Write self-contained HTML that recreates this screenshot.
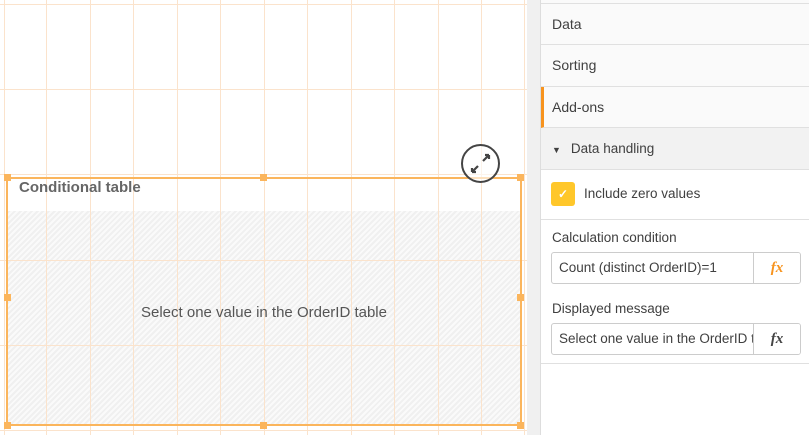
<!DOCTYPE html>
<html><head><style>
*{margin:0;padding:0;box-sizing:border-box}
body{width:809px;height:435px;overflow:hidden;font-family:"Liberation Sans",sans-serif;background:#fff;position:relative}
.canvas{position:absolute;left:0;top:0;width:527px;height:435px;background:#fff}
.v{position:absolute;top:0;bottom:0;width:1px;background:#fbe3cc}
.h{position:absolute;left:0;right:0;height:1px;background:#fbe3cc}
.obj{position:absolute;left:6px;top:177px;width:516px;height:249px;border:2px solid #fbb55c}
.hatch{position:absolute;left:0;right:0;top:32px;bottom:0;background:repeating-linear-gradient(135deg,rgba(0,0,0,.06) 0 2px,rgba(0,0,0,.02) 2px 4px)}
.title{position:absolute;left:19px;top:179px;font-weight:bold;font-size:15px;color:#666;z-index:2}
.msg{position:absolute;left:6px;width:516px;top:304px;text-align:center;font-size:15px;color:#555;z-index:2}
.hd{position:absolute;width:7px;height:7px;background:#fbb55c}
.strip{position:absolute;left:527px;top:0;width:13px;height:435px;background:#f0f0f0}
.panel{position:absolute;left:540px;top:0;width:269px;height:435px;background:#fff;border-left:1px solid #ddd}
.row{position:absolute;left:0;right:0;border-bottom:1px solid #e0e0e0;font-size:14px;color:#404040;padding-left:11px}
.fx{position:absolute;right:0;top:0;width:47px;height:100%;border-left:1px solid #ccc;text-align:center;font-family:"Liberation Serif",serif;font-style:italic;font-weight:bold;font-size:15px;line-height:30px;background:#fff}
.inp{position:absolute;left:10px;width:250px;height:32px;border:1px solid #ccc;border-radius:3px;font-size:13.5px;color:#404040;padding-left:7px;line-height:30px;overflow:hidden;white-space:nowrap}
</style></head><body>
<div class="canvas">
<div class="obj"><div class="hatch"></div></div>
<div class="v" style="left:4px"></div><div class="v" style="left:46px"></div><div class="v" style="left:90px"></div><div class="v" style="left:133px"></div><div class="v" style="left:177px"></div><div class="v" style="left:220px"></div><div class="v" style="left:264px"></div><div class="v" style="left:307px"></div><div class="v" style="left:351px"></div><div class="v" style="left:394px"></div><div class="v" style="left:438px"></div><div class="v" style="left:481px"></div><div class="v" style="left:524px"></div>
<div class="h" style="top:4px"></div><div class="h" style="top:89px"></div><div class="h" style="top:174px"></div><div class="h" style="top:260px"></div><div class="h" style="top:345px"></div><div class="h" style="top:430px"></div>
<div class="title">Conditional table</div><div class="msg">Select one value in the OrderID table</div>
<div style="position:absolute;left:6px;top:177px;width:516px;height:249px;border:2px solid #fbb55c"></div>
<div class="hd" style="left:4px;top:174px"></div><div class="hd" style="left:260px;top:174px"></div><div class="hd" style="left:517px;top:174px"></div>
<div class="hd" style="left:4px;top:294px"></div><div class="hd" style="left:517px;top:294px"></div>
<div class="hd" style="left:4px;top:422px"></div><div class="hd" style="left:260px;top:422px"></div><div class="hd" style="left:517px;top:422px"></div>
<div style="position:absolute;left:461px;top:144px;width:39px;height:39px;border:2px solid #444;border-radius:50%;background:rgba(255,255,255,.6);z-index:3">
<svg width="35" height="35" viewBox="0 0 35 35"><path d="M9 26 L15 20 M9 26 V22 M9 26 H13 M26 9 L20 15 M26 9 V13 M26 9 H22" stroke="#444" stroke-width="2.2" fill="none"/></svg></div>
</div>
<div class="strip"></div>
<div class="panel">
<div class="row" style="top:0;height:4px;background:#fafafa;padding:0"></div>
<div class="row" style="top:4px;height:41px;line-height:40px;background:#fafafa">Data</div>
<div class="row" style="top:45px;height:42px;line-height:41px;background:#fafafa">Sorting</div>
<div class="row" style="top:87px;height:41px;line-height:40px;background:#fafafa;border-left:3px solid #f7931e;padding-left:8px">Add-ons</div>
<div class="row" style="top:128px;height:42px;line-height:41px;background:#f2f2f2;font-size:13.5px"><span style="font-size:9px;margin-right:10px">▼</span>Data handling</div>
<div class="row" style="top:170px;height:50px">
<div style="position:absolute;left:10px;top:12px;width:24px;height:24px;background:#ffc72a;border-radius:3px;color:#fff;text-align:center;line-height:24px;font-size:12px;font-weight:bold">✓</div>
<div style="position:absolute;left:43px;top:16px;font-size:13.5px">Include zero values</div></div>
<div class="row" style="top:220px;height:144px;border-bottom:1px solid #e0e0e0">
<div style="position:absolute;left:11px;top:10px;font-size:13.5px">Calculation condition</div>
<div class="inp" style="top:32px">Count (distinct OrderID)=1<div class="fx" style="color:#f7931e">fx</div></div>
<div style="position:absolute;left:11px;top:81px;font-size:13.5px">Displayed message</div>
<div class="inp" style="top:103px">Select one value in the OrderID table<div class="fx" style="color:#444">fx</div></div>
</div>
</div>
</body></html>
